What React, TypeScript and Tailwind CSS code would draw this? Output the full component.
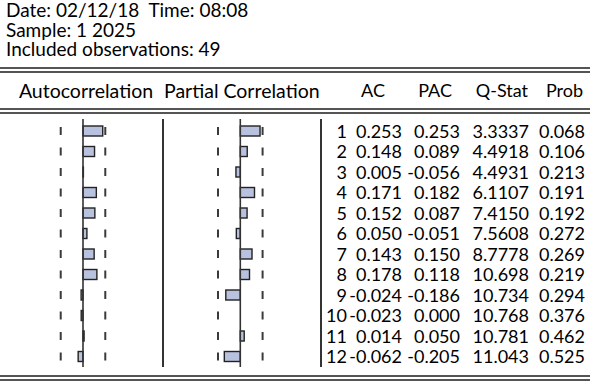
import React from 'react';

const rows: [number, number, number, string, string][] = [
  [1, 0.253, 0.253, '3.3337', '0.068'],
  [2, 0.148, 0.089, '4.4918', '0.106'],
  [3, 0.005, -0.056, '4.4931', '0.213'],
  [4, 0.171, 0.182, '6.1107', '0.191'],
  [5, 0.152, 0.087, '7.4150', '0.192'],
  [6, 0.05, -0.051, '7.5608', '0.272'],
  [7, 0.143, 0.15, '8.7778', '0.269'],
  [8, 0.178, 0.118, '10.698', '0.219'],
  [9, -0.024, -0.186, '10.734', '0.294'],
  [10, -0.023, 0.0, '10.768', '0.376'],
  [11, 0.014, 0.05, '10.781', '0.462'],
  [12, -0.062, -0.205, '11.043', '0.525'],
];

const SCALE = 78;
const BAND = (2 / Math.sqrt(49)) * SCALE;
const CHART_H = 248;

function Correlogram({ values, axis, width }: { values: number[]; axis: number; width: number }) {
  return (
    <svg width={width} height={CHART_H} className="block">
      {values.map((v, i) => {
        const cy = 12 + i * 20.5;
        const len = v * SCALE;
        return (
          <g key={i}>
            <line x1={axis - BAND} x2={axis - BAND} y1={cy - 4} y2={cy + 4} stroke="#3a3a3a" strokeWidth={2} />
            <line x1={axis + BAND} x2={axis + BAND} y1={cy - 4} y2={cy + 4} stroke="#3a3a3a" strokeWidth={2} />
            <rect
              x={Math.min(axis, axis + len)}
              y={cy - 5}
              width={Math.abs(len)}
              height={10}
              fill="#b8c1de"
              stroke="#222"
              strokeWidth={1.4}
            />
          </g>
        );
      })}
      <line x1={axis} x2={axis} y1={0} y2={CHART_H} stroke="#333" strokeWidth={1.6} />
    </svg>
  );
}

function DoubleRule() {
  return <div className="h-[6px] border-y-2 border-[#555]" />;
}

export default function App() {
  return (
    <div className="w-[590px] h-[383px] overflow-hidden bg-white text-black font-['Lato',sans-serif]">
      <div className="h-[67px] pl-[6px] text-[19px] leading-[19.5px] whitespace-pre">
        <div>Date: 02/12/18  Time: 08:08</div>
        <div>Sample: 1 2025</div>
        <div>Included observations: 49</div>
      </div>

      <DoubleRule />

      <div className="flex h-[35px] items-center text-[18px]">
        <div className="w-[164px] pl-[8px] text-center text-[19.5px]">Autocorrelation</div>
        <div className="w-[158px] pr-[5px] text-center text-[19.5px] whitespace-nowrap">Partial Correlation</div>
        <div className="w-[25px]" />
        <div className="w-[55px] pr-[17px] text-right">AC</div>
        <div className="w-[58px] pr-[8px] text-right">PAC</div>
        <div className="w-[69px] pr-[1px] text-right">Q-Stat</div>
        <div className="w-[56px] pr-[2px] text-right">Prob</div>
      </div>

      <DoubleRule />

      <div className="flex pt-[5px]">
        <div className="w-[164px] border-r-2 border-[#333]">
          <Correlogram values={rows.map((r) => r[1])} axis={83} width={162} />
        </div>
        <div className="w-[158px] border-r-2 border-[#333]">
          <Correlogram values={rows.map((r) => r[2])} axis={76.3} width={156} />
        </div>
        <div className="pt-[1.75px] text-[18px] leading-[20.5px] tabular-nums">
          {rows.map(([lag, ac, pac, q, prob]) => (
            <div key={lag} className="flex h-[20.5px] text-right">
              <div className="w-[25px]">{lag}</div>
              <div className="w-[55px]">{ac.toFixed(3)}</div>
              <div className="w-[58px]">{pac.toFixed(3)}</div>
              <div className="w-[69px]">{q}</div>
              <div className="w-[56px]">{prob}</div>
            </div>
          ))}
        </div>
      </div>

      <div className="mt-[8px]">
        <DoubleRule />
      </div>
    </div>
  );
}
